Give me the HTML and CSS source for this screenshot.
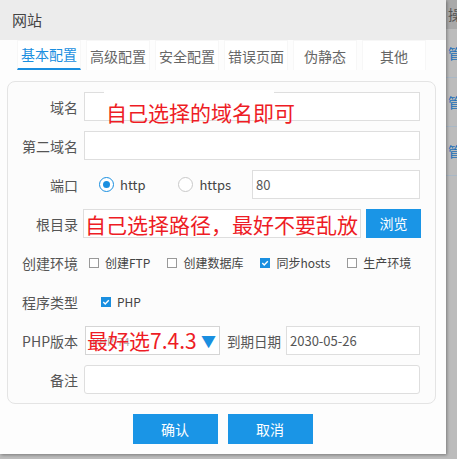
FILE: index.html
```html
<!DOCTYPE html>
<html lang="zh-CN">
<head>
<meta charset="utf-8">
<title>网站</title>
<link rel="stylesheet" href="styles.css">
</head>
<body>
<div class="page">
  <div class="dialog">
    <div class="title">网站</div>
    <div class="tabs">
      <div class="tab active">基本配置</div>
      <div class="tab">高级配置</div>
      <div class="tab">安全配置</div>
      <div class="tab">错误页面</div>
      <div class="tab">伪静态</div>
      <div class="tab">其他</div>
    </div>
    <div class="panel">
      <div class="row">
        <div class="label">域名</div>
        <div class="field">
          <div class="input"></div>
          <div class="mask"></div>
          <span class="note note1">自己选择的域名即可</span>
        </div>
      </div>
      <div class="row">
        <div class="label">第二域名</div>
        <div class="field"><div class="input"></div></div>
      </div>
      <div class="row">
        <div class="label">端口</div>
        <div class="field flex">
          <span class="radio on"></span><span class="rtext">http</span>
          <span class="radio off"></span><span class="rtext">https</span>
          <div class="input port">80</div>
        </div>
      </div>
      <div class="row">
        <div class="label">根目录</div>
        <div class="field flex">
          <div class="input root"></div>
          <div class="btn-browse">浏览</div>
          <span class="note note2">自己选择路径，最好不要乱放</span>
        </div>
      </div>
      <div class="row">
        <div class="label">创建环境</div>
        <div class="field flex checks">
          <span class="chk-item"><span class="chk"></span>创建FTP</span>
          <span class="chk-item"><span class="chk"></span>创建数据库</span>
          <span class="chk-item"><span class="chk checked"><svg viewBox="0 0 10 10" width="10" height="10"><path d="M2.3 5.1 L4.2 6.9 L7.8 3.2" fill="none" stroke="#fff" stroke-width="1.4"/></svg></span>同步hosts</span>
          <span class="chk-item"><span class="chk"></span>生产环境</span>
        </div>
      </div>
      <div class="row">
        <div class="label">程序类型</div>
        <div class="field flex checks">
          <span class="chk-item php"><span class="chk checked"><svg viewBox="0 0 10 10" width="10" height="10"><path d="M2.3 5.1 L4.2 6.9 L7.8 3.2" fill="none" stroke="#fff" stroke-width="1.4"/></svg></span>PHP</span>
        </div>
      </div>
      <div class="row">
        <div class="label">PHP版本</div>
        <div class="field flex">
          <div class="select">
            <span class="sel-text">PHP-74</span>
            <span class="arrow">▼</span>
            <span class="note note3">最好选7.4.3</span>
          </div>
          <div class="label2">到期日期</div>
          <div class="input date">2030-05-26</div>
        </div>
      </div>
      <div class="row">
        <div class="label">备注</div>
        <div class="field"><div class="input memo"></div></div>
      </div>
    </div>
    <div class="actions">
      <div class="btn">确认</div>
      <div class="btn">取消</div>
    </div>
  </div>
  <div class="behind">
    <div class="bh-head">操</div>
    <div class="bh-row">管</div>
    <div class="bh-row">管</div>
    <div class="bh-row">管</div>
    <div class="bh-rest"></div>
  </div>
</div>
</body>
</html>
```

FILE: styles.css
```css
* { box-sizing: border-box; }
html, body { margin: 0; padding: 0; }
body {
  background: #bdbdbd;
  font-family: "Noto Sans CJK SC", "Noto Sans", sans-serif;
  color: #555;
}
.page {
  display: grid;
  grid-template-columns: 446px 11px;
  width: 457px;
  height: 459px;
  overflow: hidden;
}
.dialog {
  height: 454px;
  background: #fdfdfd;
  box-shadow: 1px 1px 3px rgba(0,0,0,0.35);
  position: relative;
  z-index: 1;
  display: flex;
  flex-direction: column;
}
.title {
  height: 40px;
  line-height: 40px;
  background: #ececec;
  padding-left: 12px;
  font-size: 15px;
  color: #444;
}
.tabs {
  display: flex;
  gap: 5px;
  padding: 0 0 0 17px;
  height: 30px;
}
.tab {
  width: 64px;
  height: 30px;
  line-height: 30px;
  text-align: center;
  font-size: 14px;
  color: #666;
  background: #fff;
  border: 1px solid #f7f7f7;
  border-bottom: none;
}
.tab.active {
  color: #1a8fe0;
  border-bottom: 2px solid #1a8fe0;
  line-height: 27px;
}
.panel {
  margin: 11px 10px 0 7px;
  border: 1px solid #e4e4e4;
  border-radius: 8px;
  background: #fcfcfc;
  padding: 10px 15px 9px 0;
  display: flex;
  flex-direction: column;
  gap: 10px;
}
.row {
  display: flex;
  height: 29px;
  align-items: center;
}
.label {
  width: 70px;
  text-align: right;
  font-size: 14px;
  color: #555;
  margin-right: 6px;
  flex: none;
}
.field {
  flex: 1;
  height: 29px;
  position: relative;
}
.flex {
  display: flex;
  align-items: center;
}
.input {
  height: 29px;
  border: 1px solid #dedede;
  background: #fff;
  font-size: 13px;
  color: #555;
  line-height: 27px;
  padding-left: 3px;
}
.mask {
  position: absolute;
  left: 20px;
  top: -2px;
  width: 170px;
  height: 6px;
  background: #fff;
}
.note {
  position: absolute;
  color: #ee1c25;
  font-size: 21px;
  line-height: 22px;
  white-space: nowrap;
}
.note1 { left: 22px; top: 9px; }
.note2 { left: 1px; top: 4px; }
.note3 { left: 1px; top: 2px; }
.radio {
  width: 15px;
  height: 15px;
  border-radius: 50%;
  border: 1px solid #c9c9c9;
  background: #fff;
  flex: none;
  position: relative;
}
.radio.on { border-color: #1a8fe0; margin-left: 15px; }
.radio.on::after {
  content: "";
  position: absolute;
  left: 3px; top: 3px;
  width: 7px; height: 7px;
  border-radius: 50%;
  background: #1a8fe0;
}
.radio.off { margin-left: 33px; }
.rtext {
  font-size: 13px;
  color: #444;
  margin-left: 6px;
}
.input.port {
  width: 168px;
  margin-left: auto;
}
.input.root {
  width: 278px;
  margin-left: -1px;
}
.btn-browse {
  width: 55px;
  height: 29px;
  margin-left: 5px;
  background: #1a95e6;
  color: #fff;
  font-size: 14px;
  line-height: 29px;
  text-align: center;
}
.checks { font-size: 12px; color: #444; gap: 17px; }
.chk-item {
  display: flex;
  align-items: center;
}
.chk-item:first-child { margin-left: 5px; }
.chk-item.php { margin-left: 17px; }
.chk {
  width: 10px;
  height: 10px;
  border: 1px solid #999;
  background: #fff;
  margin-right: 6px;
  display: block;
}
.chk.checked {
  border: none;
  background: #1a8fe0;
}
.chk svg { display: block; }
.select {
  width: 135px;
  height: 29px;
  border: 1px solid #d5d5d5;
  background: #fff;
  position: relative;
  margin-left: 1px;
  flex: none;
}
.sel-text {
  position: absolute;
  left: 6px;
  top: 6px;
  font-size: 11px;
  color: #aaa;
}
.arrow {
  position: absolute;
  right: 3px;
  top: 3px;
  color: #1a8fe0;
  font-size: 15px;
  line-height: 22px;
}
.label2 {
  font-size: 13.5px;
  color: #555;
  margin: 0 5px 0 7px;
  white-space: nowrap;
}
.input.date { flex: 1; }
.input.memo { border-radius: 3px; }
.actions {
  display: flex;
  justify-content: center;
  gap: 10px;
  margin-top: 10px;
  padding-right: 1px;
}
.btn {
  width: 85px;
  height: 30px;
  background: #1a95e6;
  color: #fff;
  font-size: 14px;
  line-height: 30px;
  text-align: center;
}
.behind {
  background: #bcbcbc;
  display: flex;
  flex-direction: column;
  font-size: 14px;
  overflow: hidden;
}
.bh-head {
  height: 29px;
  line-height: 29px;
  background: #a9a9a9;
  color: #555;
  padding-left: 2px;
  white-space: nowrap;
}
.bh-row {
  height: 49px;
  line-height: 49px;
  color: #1a6fb8;
  padding-left: 2px;
  border-bottom: 1px solid #a9b8c6;
  white-space: nowrap;
}
.bh-rest { flex: 1; }
```
